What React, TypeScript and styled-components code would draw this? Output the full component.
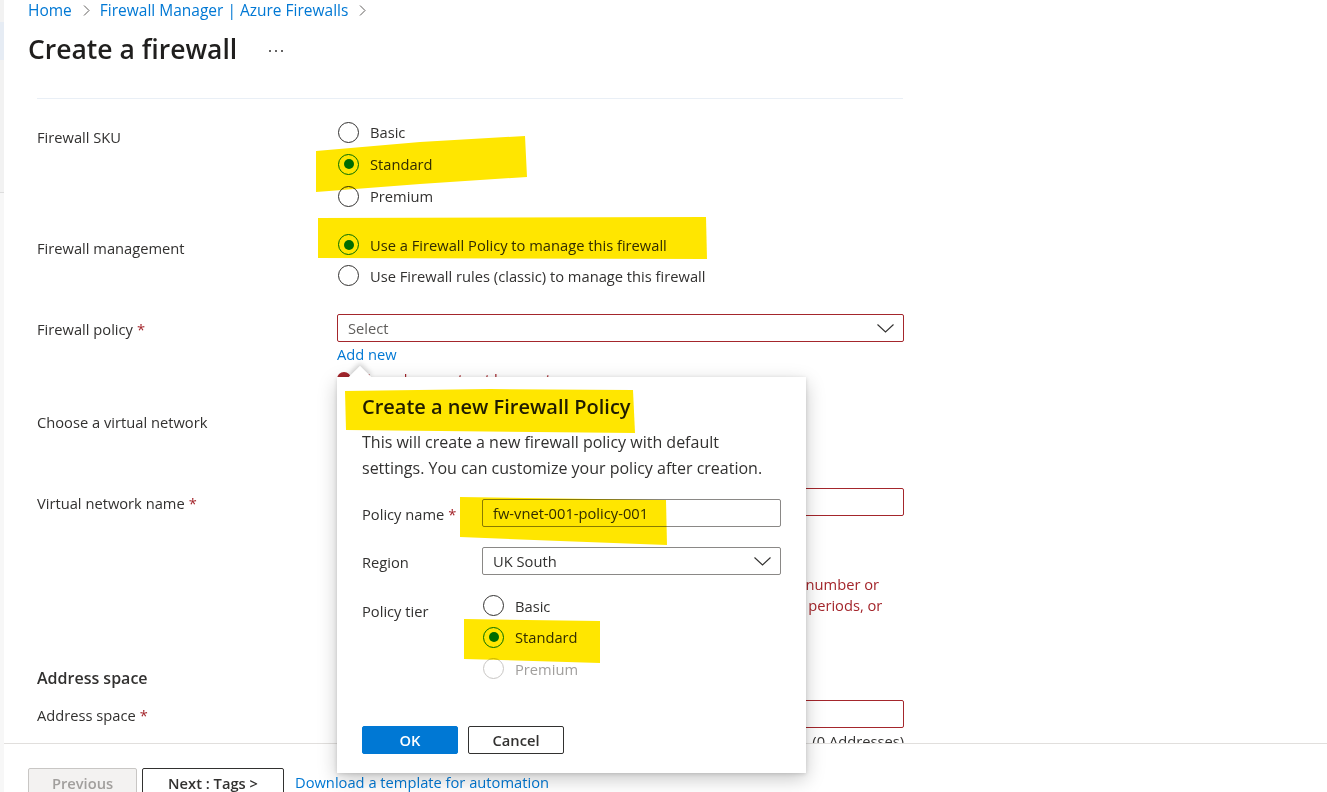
import React from 'react';
import styled, { createGlobalStyle } from 'styled-components';

const GlobalStyle = createGlobalStyle`
  * {
    margin: 0;
    padding: 0;
    box-sizing: border-box;
  }

  html, body {
    height: 100%;
  }

  body {
    font-family: 'Segoe UI', 'Open Sans', sans-serif;
    color: #323130;
    background: #ffffff;
    -webkit-font-smoothing: antialiased;
  }
`;

const BASE = '14.7px';

const Page = styled.div`
  position: relative;
  display: flex;
  width: 100vw;
  height: 100vh;
  overflow: hidden;
  background: #ffffff;
`;

const SideRail = styled.div`
  width: 4px;
  flex-shrink: 0;
  display: flex;
  flex-direction: column;
  background: #f5f5f5;
`;

const RailBlock = styled.div<{ $h: number; $tone: string; $line?: boolean }>`
  height: ${p => p.$h}px;
  background: ${p => p.$tone};
  border-bottom: ${p => (p.$line ? '1px solid #dddddd' : 'none')};
`;

const Main = styled.div`
  flex: 1;
  min-width: 0;
  display: flex;
  flex-direction: column;
`;

const Header = styled.header`
  padding-left: 24px;
`;

const Breadcrumb = styled.nav`
  display: flex;
  align-items: center;
  height: 20px;
  font-size: 15.5px;
  line-height: 20px;
`;

const Crumb = styled.a`
  color: #0078d4;
  text-decoration: none;
`;

const CrumbSep = styled.svg`
  width: 7px;
  height: 11px;
  margin: 0 10px 0 11px;
  flex-shrink: 0;
`;

const TitleRow = styled.div`
  display: flex;
  align-items: center;
  height: 36px;
  margin-top: 11px;
`;

const Title = styled.h1`
  font-size: 26.5px;
  font-weight: 600;
  line-height: 36px;
  color: #201f1e;
`;

const MoreDots = styled.span`
  display: flex;
  gap: 4px;
  margin-left: 32px;
  margin-top: 4px;

  i {
    width: 2px;
    height: 2px;
    border-radius: 50%;
    background: #323130;
  }
`;

const Content = styled.div`
  flex: 1;
  overflow: hidden;
  padding-left: 33px;
`;

const Divider = styled.div`
  width: 866px;
  margin-top: 31px;
  border-top: 1px solid #e9eff6;
`;

const FormRow = styled.div<{ $top: number }>`
  display: grid;
  grid-template-columns: 300px 567px;
  margin-top: ${p => p.$top}px;
`;

const FieldLabel = styled.div<{ $pad: number }>`
  padding-top: ${p => p.$pad}px;
  font-size: ${BASE};
  line-height: 20px;
`;

const Required = styled.span`
  color: #a4262c;
  margin-left: 4px;
`;

const SectionHeading = styled.h2<{ $top: number }>`
  margin-top: ${p => p.$top}px;
  font-size: 16px;
  font-weight: 600;
  line-height: 22px;
  color: #323130;
`;

const RadioGroup = styled.div<{ $item: number }>`
  display: flex;
  flex-direction: column;

  & > label {
    height: ${p => p.$item}px;
  }
`;

const RadioItem = styled.label<{ $disabled?: boolean }>`
  display: flex;
  align-items: center;
  gap: 11px;
  padding-left: 1px;
  font-size: ${BASE};
  line-height: 20px;
  color: ${p => (p.$disabled ? '#a19f9d' : '#323130')};
  white-space: nowrap;
`;

const RadioCircle = styled.span<{ $checked?: boolean; $disabled?: boolean }>`
  position: relative;
  width: 21px;
  height: 21px;
  flex-shrink: 0;
  border-radius: 50%;
  border: 1px solid
    ${p => (p.$disabled ? '#c8c6c4' : p.$checked ? '#0078d4' : '#323130')};
  background: #ffffff;

  &::after {
    content: '';
    display: ${p => (p.$checked ? 'block' : 'none')};
    position: absolute;
    left: 4.5px;
    top: 4.5px;
    width: 10px;
    height: 10px;
    border-radius: 50%;
    background: #0078d4;
  }
`;

const FieldBox = styled.div<{ $error?: boolean; $h?: number }>`
  display: flex;
  align-items: center;
  justify-content: space-between;
  height: ${p => p.$h ?? 28}px;
  padding: 0 10px;
  border: 1px solid ${p => (p.$error ? '#a4262c' : '#8a8886')};
  border-radius: 2px;
  background: #ffffff;
  font-size: ${BASE};
  color: #323130;
`;

const Placeholder = styled.span`
  color: #605e5c;
`;

const Chevron = styled.svg`
  width: 17px;
  height: 9px;
  margin-right: -1px;
`;

const LinkText = styled.a<{ $top?: number }>`
  display: inline-block;
  margin-top: ${p => p.$top ?? 0}px;
  font-size: ${BASE};
  line-height: 20px;
  color: #0078d4;
  text-decoration: none;
`;

const ErrorLine = styled.div<{ $top?: number }>`
  display: flex;
  align-items: center;
  gap: 8px;
  height: 21px;
  margin-top: ${p => p.$top ?? 0}px;
  font-size: ${BASE};
  color: #a4262c;
  white-space: nowrap;
`;

const ErrorDot = styled.span`
  width: 14px;
  height: 14px;
  border-radius: 50%;
  background: #a4262c;
  flex-shrink: 0;
`;

const ErrorBlock = styled.div`
  margin-top: 15px;
`;

const HintRow = styled.div`
  display: flex;
  justify-content: flex-end;
  margin-top: 3px;
  font-size: ${BASE};
  line-height: 20px;
  color: #323130;
`;

const Footer = styled.footer`
  flex-shrink: 0;
  height: 49px;
  border-top: 1px solid #e1dfdd;
  display: flex;
  align-items: flex-start;
  gap: 5px;
  padding: 24px 0 0 24px;
`;

const FooterButton = styled.button<{ $w: number; $disabled?: boolean }>`
  width: ${p => p.$w}px;
  height: 30px;
  border-radius: 2px;
  border: 1px solid ${p => (p.$disabled ? '#c8c6c4' : '#323130')};
  background: ${p => (p.$disabled ? '#f3f2f1' : '#ffffff')};
  color: ${p => (p.$disabled ? '#a19f9d' : '#323130')};
  font-family: inherit;
  font-size: ${BASE};
  font-weight: 600;
  line-height: 26px;
`;

const FooterLink = styled(LinkText)`
  margin-left: 6px;
  line-height: 24px;
  padding-top: 2px;
`;

/* callout over the form */
const Callout = styled.div`
  position: absolute;
  left: 337px;
  top: 377px;
  width: 469px;
  height: 396px;
  z-index: 10;
  background: #ffffff;
  box-shadow: 0 6px 18px rgba(0, 0, 0, 0.22), 0 1px 4px rgba(0, 0, 0, 0.14);
`;

const Beak = styled.div`
  position: absolute;
  left: 15px;
  top: -8px;
  width: 16px;
  height: 16px;
  background: #ffffff;
  transform: rotate(45deg);
  box-shadow: -2px -2px 5px rgba(0, 0, 0, 0.18);
`;

const CalloutBody = styled.div`
  position: relative;
  z-index: 1;
  height: 100%;
  background: #ffffff;
  padding: 16px 25px 0 25px;
`;

const CalloutTitle = styled.h3`
  font-size: 20px;
  font-weight: 600;
  line-height: 28px;
  color: #201f1e;
`;

const CalloutText = styled.p`
  width: 420px;
  margin-top: 8px;
  font-size: 16px;
  line-height: 26px;
  color: #323130;
`;

const CalloutField = styled.div<{ $top: number }>`
  display: grid;
  grid-template-columns: 120px 299px;
  margin-top: ${p => p.$top}px;
`;

const CalloutActions = styled.div`
  display: flex;
  gap: 10px;
  margin-top: 41px;
`;

const DialogButton = styled.button<{ $primary?: boolean }>`
  width: 96px;
  height: 28px;
  border-radius: 2px;
  border: 1px solid ${p => (p.$primary ? '#0078d4' : '#323130')};
  background: ${p => (p.$primary ? '#0078d4' : '#ffffff')};
  color: ${p => (p.$primary ? '#ffffff' : '#323130')};
  font-family: inherit;
  font-size: ${BASE};
  font-weight: 600;
`;

/* highlighter marks drawn on top of the screenshot */
const Mark = styled.svg<{ $x: number; $y: number }>`
  position: absolute;
  left: ${p => p.$x}px;
  top: ${p => p.$y}px;
  z-index: 20;
  mix-blend-mode: multiply;
  pointer-events: none;
  overflow: visible;
`;

const Highlight: React.FC<{ points: [number, number][] }> = ({ points }) => {
  const xs = points.map(p => p[0]);
  const ys = points.map(p => p[1]);
  const x = Math.min(...xs);
  const y = Math.min(...ys);
  const w = Math.max(...xs) - x;
  const h = Math.max(...ys) - y;
  const pts = points.map(([px, py]) => `${px - x},${py - y}`).join(' ');
  return (
    <Mark $x={x} $y={y} width={w} height={h} viewBox={`0 0 ${w} ${h}`}>
      <polygon points={pts} fill="#ffe600" />
    </Mark>
  );
};

const ChevronDown = () => (
  <Chevron viewBox="0 0 17 9">
    <polyline points="0.5,0.5 8.5,8 16.5,0.5" fill="none" stroke="#323130" strokeWidth="1.1" />
  </Chevron>
);

const Sep = () => (
  <CrumbSep viewBox="0 0 7 11">
    <polyline points="1,0.5 6,5.5 1,10.5" fill="none" stroke="#605e5c" strokeWidth="1" />
  </CrumbSep>
);

interface RadioOption {
  label: string;
  checked?: boolean;
  disabled?: boolean;
}

const Radios: React.FC<{ options: RadioOption[]; item: number }> = ({ options, item }) => (
  <RadioGroup $item={item}>
    {options.map(o => (
      <RadioItem key={o.label} $disabled={o.disabled}>
        <RadioCircle $checked={o.checked} $disabled={o.disabled} />
        {o.label}
      </RadioItem>
    ))}
  </RadioGroup>
);

const App: React.FC = () => {
  return (
    <>
      <GlobalStyle />
      <Page>
        <SideRail>
          <RailBlock $h={22} $tone="#f2f2f2" />
          <RailBlock $h={38} $tone="#e6ecf4" />
          <RailBlock $h={133} $tone="#f2f2f2" $line />
          <RailBlock $h={599} $tone="#f7f7f7" />
        </SideRail>

        <Main>
          <Header>
            <Breadcrumb>
              <Crumb>Home</Crumb>
              <Sep />
              <Crumb>Firewall Manager | Azure Firewalls</Crumb>
              <Sep />
            </Breadcrumb>
            <TitleRow>
              <Title>Create a firewall</Title>
              <MoreDots>
                <i />
                <i />
                <i />
              </MoreDots>
            </TitleRow>
          </Header>

          <Content>
            <Divider />

            <FormRow $top={17}>
              <FieldLabel $pad={11}>Firewall SKU</FieldLabel>
              <Radios
                item={32}
                options={[{ label: 'Basic' }, { label: 'Standard', checked: true }, { label: 'Premium' }]}
              />
            </FormRow>

            <FormRow $top={17}>
              <FieldLabel $pad={9}>Firewall management</FieldLabel>
              <Radios
                item={31}
                options={[
                  { label: 'Use a Firewall Policy to manage this firewall', checked: true },
                  { label: 'Use Firewall rules (classic) to manage this firewall' },
                ]}
              />
            </FormRow>

            <FormRow $top={23}>
              <FieldLabel $pad={5}>
                Firewall policy<Required>*</Required>
              </FieldLabel>
              <div>
                <FieldBox $error>
                  <Placeholder>Select</Placeholder>
                  <ChevronDown />
                </FieldBox>
                <LinkText $top={2}>Add new</LinkText>
                <ErrorLine $top={3}>
                  <ErrorDot />
                  The value must not be empty.
                </ErrorLine>
              </div>
            </FormRow>

            <FormRow $top={17}>
              <FieldLabel $pad={6}>Choose a virtual network</FieldLabel>
              <Radios item={31} options={[{ label: 'Create new' }, { label: 'Use existing' }]} />
            </FormRow>

            <FormRow $top={20}>
              <FieldLabel $pad={5}>
                Virtual network name<Required>*</Required>
              </FieldLabel>
              <div>
                <FieldBox $error />
                <ErrorBlock>
                  <ErrorLine>
                    <ErrorDot />
                    The value must not be empty.
                  </ErrorLine>
                  <ErrorLine>The name must be between 2 and 64 characters long.</ErrorLine>
                  <ErrorLine>The name must begin with a letter or number, and end with a letter, number or</ErrorLine>
                  <ErrorLine>an underscore, and may contain only letters, numbers, underscores, periods, or</ErrorLine>
                  <ErrorLine>hyphens.</ErrorLine>
                </ErrorBlock>
              </div>
            </FormRow>

            <SectionHeading $top={31}>Address space</SectionHeading>

            <FormRow $top={11}>
              <FieldLabel $pad={5}>
                Address space<Required>*</Required>
              </FieldLabel>
              <div>
                <FieldBox $error />
                <HintRow>(0 Addresses)</HintRow>
              </div>
            </FormRow>
          </Content>

          <Footer>
            <FooterButton $w={109} $disabled>
              Previous
            </FooterButton>
            <FooterButton $w={142}>Next : Tags &gt;</FooterButton>
            <FooterLink>Download a template for automation</FooterLink>
          </Footer>
        </Main>

        <Callout>
          <Beak />
          <CalloutBody>
            <CalloutTitle>Create a new Firewall Policy</CalloutTitle>
            <CalloutText>
              This will create a new firewall policy with default settings. You can customize your policy after
              creation.
            </CalloutText>

            <CalloutField $top={18}>
              <FieldLabel $pad={5}>
                Policy name<Required>*</Required>
              </FieldLabel>
              <FieldBox>fw-vnet-001-policy-001</FieldBox>
            </CalloutField>

            <CalloutField $top={20}>
              <FieldLabel $pad={5}>Region</FieldLabel>
              <FieldBox>
                UK South
                <ChevronDown />
              </FieldBox>
            </CalloutField>

            <CalloutField $top={15}>
              <FieldLabel $pad={11}>Policy tier</FieldLabel>
              <Radios
                item={31.5}
                options={[
                  { label: 'Basic' },
                  { label: 'Standard', checked: true },
                  { label: 'Premium', disabled: true },
                ]}
              />
            </CalloutField>

            <CalloutActions>
              <DialogButton $primary>OK</DialogButton>
              <DialogButton>Cancel</DialogButton>
            </CalloutActions>
          </CalloutBody>
        </Callout>

        <Highlight points={[[316, 151], [420, 142], [525, 136], [527, 177], [420, 184], [316, 192]]} />
        <Highlight points={[[318, 218], [706, 217], [707, 259], [318, 258]]} />
        <Highlight points={[[345, 391], [490, 389], [633, 390], [635, 433], [346, 430]]} />
        <Highlight points={[[460, 497], [666, 500], [667, 545], [560, 541], [460, 537]]} />
        <Highlight points={[[464, 619], [600, 621], [600, 663], [464, 659]]} />
      </Page>
    </>
  );
};

export default App;
